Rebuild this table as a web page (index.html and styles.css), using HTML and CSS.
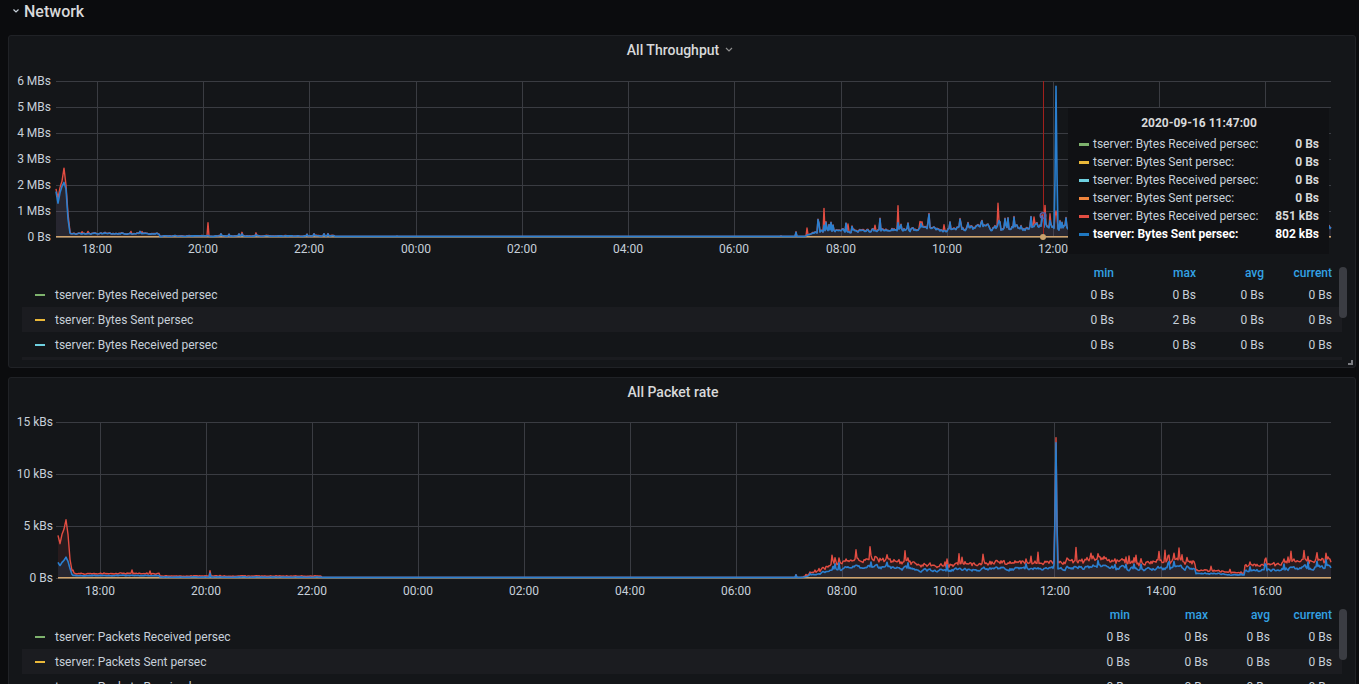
FILE: index.html
```html
<!DOCTYPE html>
<html lang="en">
<head>
<meta charset="utf-8">
<title>Network</title>
<link rel="stylesheet" href="styles.css">
</head>
<body>
<div class="dash">
  <div class="row-head">
    <svg class="row-chev" width="6" height="4" viewBox="0 0 6 4"><path d="M0.5 0.5L3 3L5.5 0.5"/></svg>
    <span>Network</span>
  </div>

  <section class="panel">
    <header class="panel-title">
      <span>All Throughput</span>
      <svg class="title-chev" width="8" height="5" viewBox="0 0 8 5"><path d="M1 1L4 4L7 1"/></svg>
    </header>
    <svg class="chart" width="1346" height="195" viewBox="9 63 1346 195">
      <g class="grid">
        <path d="M56 81.5H1331M56 107.5H1331M56 133.5H1331M56 159.5H1331M56 185.5H1331M56 211.5H1331M56 237.5H1331"/>
        <path d="M97.5 81V237M203.5 81V237M309.5 81V237M416.5 81V237M522.5 81V237M628.5 81V237M734.5 81V237M841.5 81V237M947.5 81V237M1053.5 81V237M1159.5 81V237M1265.5 81V237"/>
      </g>
      <g id="plot1"></g>
      <line class="hover-line" x1="1043.5" y1="81" x2="1043.5" y2="237"/>
      <circle class="hover-dot-b" cx="1043" cy="215.5" r="2.8"/>
      <circle class="hover-dot-z" cx="1043" cy="237" r="3"/>
      <g class="ylab">
        <text x="51" y="85">6 MBs</text>
        <text x="51" y="111">5 MBs</text>
        <text x="51" y="137">4 MBs</text>
        <text x="51" y="163">3 MBs</text>
        <text x="51" y="189">2 MBs</text>
        <text x="51" y="215">1 MBs</text>
        <text x="51" y="241">0 Bs</text>
      </g>
      <g class="xlab">
        <text x="97" y="253">18:00</text>
        <text x="203" y="253">20:00</text>
        <text x="309" y="253">22:00</text>
        <text x="416" y="253">00:00</text>
        <text x="522" y="253">02:00</text>
        <text x="628" y="253">04:00</text>
        <text x="734" y="253">06:00</text>
        <text x="841" y="253">08:00</text>
        <text x="947" y="253">10:00</text>
        <text x="1053" y="253">12:00</text>
        <text x="1159" y="253">14:00</text>
        <text x="1265" y="253">16:00</text>
      </g>
    </svg>
    <div class="legend">
      <div class="lg-row lg-head"><span></span><span class="v">min</span><span class="v">max</span><span class="v">avg</span><span class="v">current</span></div>
      <div class="lg-row"><span class="nm"><i class="dash-sw c1"></i>tserver: Bytes Received persec</span><span class="v">0 Bs</span><span class="v">0 Bs</span><span class="v">0 Bs</span><span class="v">0 Bs</span></div>
      <div class="lg-row alt"><span class="nm"><i class="dash-sw c2"></i>tserver: Bytes Sent persec</span><span class="v">0 Bs</span><span class="v">2 Bs</span><span class="v">0 Bs</span><span class="v">0 Bs</span></div>
      <div class="lg-row"><span class="nm"><i class="dash-sw c3"></i>tserver: Bytes Received persec</span><span class="v">0 Bs</span><span class="v">0 Bs</span><span class="v">0 Bs</span><span class="v">0 Bs</span></div>
      <div class="lg-more"></div>
    </div>
    <div class="scroll-thumb"></div>
    <div class="resize"></div>

    <div class="tooltip">
      <div class="tt-time">2020-09-16 11:47:00</div>
      <div class="tt-row"><i class="tt-sw c1"></i><span class="tt-name">tserver: Bytes Received persec:</span><span class="tt-val">0 Bs</span></div>
      <div class="tt-row"><i class="tt-sw c2"></i><span class="tt-name">tserver: Bytes Sent persec:</span><span class="tt-val">0 Bs</span></div>
      <div class="tt-row"><i class="tt-sw c3"></i><span class="tt-name">tserver: Bytes Received persec:</span><span class="tt-val">0 Bs</span></div>
      <div class="tt-row"><i class="tt-sw c4"></i><span class="tt-name">tserver: Bytes Sent persec:</span><span class="tt-val">0 Bs</span></div>
      <div class="tt-row"><i class="tt-sw c5"></i><span class="tt-name">tserver: Bytes Received persec:</span><span class="tt-val">851 kBs</span></div>
      <div class="tt-row tt-hl"><i class="tt-sw c6"></i><span class="tt-name">tserver: Bytes Sent persec:</span><span class="tt-val">802 kBs</span></div>
    </div>
  </section>

  <section class="panel">
    <header class="panel-title">
      <span>All Packet rate</span>
      <svg class="title-chev hidden" width="8" height="5" viewBox="0 0 8 5"><path d="M1 1L4 4L7 1"/></svg>
    </header>
    <svg class="chart" width="1346" height="195" viewBox="9 405 1346 195">
      <g class="grid">
        <path d="M56 422.5H1331M56 474.5H1331M56 526.5H1331M56 578.5H1331"/>
        <path d="M100.5 422V578M206.5 422V578M312.5 422V578M418.5 422V578M524.5 422V578M630.5 422V578M736.5 422V578M842.5 422V578M948.5 422V578M1054.5 422V578M1161.5 422V578M1267.5 422V578"/>
      </g>
      <g id="plot2"></g>
      <g class="ylab">
        <text x="53" y="426">15 kBs</text>
        <text x="53" y="478">10 kBs</text>
        <text x="53" y="530">5 kBs</text>
        <text x="53" y="582">0 Bs</text>
      </g>
      <g class="xlab">
        <text x="100" y="595">18:00</text>
        <text x="206" y="595">20:00</text>
        <text x="312" y="595">22:00</text>
        <text x="418" y="595">00:00</text>
        <text x="524" y="595">02:00</text>
        <text x="630" y="595">04:00</text>
        <text x="736" y="595">06:00</text>
        <text x="842" y="595">08:00</text>
        <text x="948" y="595">10:00</text>
        <text x="1055" y="595">12:00</text>
        <text x="1161" y="595">14:00</text>
        <text x="1267" y="595">16:00</text>
      </g>
    </svg>
    <div class="legend legend-b">
      <div class="lg-row lg-head"><span></span><span class="v">min</span><span class="v">max</span><span class="v">avg</span><span class="v">current</span></div>
      <div class="lg-row"><span class="nm"><i class="dash-sw c1"></i>tserver: Packets Received persec</span><span class="v">0 Bs</span><span class="v">0 Bs</span><span class="v">0 Bs</span><span class="v">0 Bs</span></div>
      <div class="lg-row alt"><span class="nm"><i class="dash-sw c2"></i>tserver: Packets Sent persec</span><span class="v">0 Bs</span><span class="v">0 Bs</span><span class="v">0 Bs</span><span class="v">0 Bs</span></div>
      <div class="lg-row"><span class="nm"><i class="dash-sw c3"></i>tserver: Packets Received persec</span><span class="v">0 Bs</span><span class="v">0 Bs</span><span class="v">0 Bs</span><span class="v">0 Bs</span></div>
    </div>
    <div class="scroll-thumb"></div>
  </section>
</div>
<script src="script.js"></script>
</body>
</html>
```

FILE: styles.css
```css
* { box-sizing: border-box; }
html, body { margin: 0; background: #0b0c0e; }
body {
  font-family: Roboto, "Helvetica Neue", Arial, sans-serif;
  font-size: 12px;
  color: #c7d0d9;
  height: 684px;
  overflow: hidden;
}
.dash { padding: 0 3px 0 8px; }

.row-head {
  height: 22px;
  display: flex;
  align-items: center;
  gap: 5px;
  padding-left: 5px;
  margin-bottom: 13px;
  color: #d8d9da;
  font-size: 16px;
  font-weight: 500;
}
.row-chev path { fill: none; stroke: #c7d0d9; stroke-width: 1.2; }

.panel {
  position: relative;
  height: 333px;
  margin-bottom: 9px;
  background: #141619;
  border: 1px solid #202226;
  border-radius: 3px;
  overflow: hidden;
}
.panel-title {
  height: 27px;
  display: flex;
  align-items: center;
  justify-content: center;
  gap: 6px;
  padding-right: 4px;
  font-size: 14px;
  font-weight: 500;
  color: #d8d9da;
}
.title-chev path { fill: none; stroke: #8e8e8e; stroke-width: 1.2; }
.title-chev.hidden { visibility: hidden; }

.chart { display: block; }
.grid path { fill: none; stroke: #3a3c42; stroke-width: 1; }
.ylab text { fill: #c7d0d9; font-size: 12px; text-anchor: end; }
.xlab text { fill: #c7d0d9; font-size: 12px; text-anchor: middle; }

.fill-red { fill: rgba(226, 77, 66, 0.1); stroke: none; }
.fill-blue { fill: rgba(31, 120, 193, 0.12); stroke: none; }
.zero { fill: none; stroke: #cfa36c; stroke-width: 1.6; }
.line-red { fill: none; stroke: #e24d42; stroke-width: 1.4; stroke-linejoin: round; }
.line-blue { fill: none; stroke: #2a7fcf; stroke-width: 1.6; stroke-linejoin: round; }
.hover-line { stroke: #a0201c; stroke-width: 1; }
.hover-dot-b { fill: none; stroke: #5f5fa8; stroke-width: 1.5; }
.hover-dot-z { fill: #c9a26d; }

.legend {
  height: 102px;
  overflow: hidden;
  padding: 5px 13px 0;
}
.lg-row {
  display: grid;
  grid-template-columns: 1fr 80px 82px 68px 68px;
  align-items: center;
  height: 25px;
}
.legend-b .lg-row { grid-template-columns: 1fr 80px 78px 62px 62px; }
.lg-row.alt, .lg-more { background: #1b1c20; }
.lg-more { height: 3px; }
.lg-head { height: 19px; color: #33a2e5; font-weight: 500; }
.v { text-align: right; padding-right: 10px; white-space: nowrap; }
.nm { display: flex; align-items: center; padding-left: 13px; white-space: nowrap; }
.dash-sw { display: block; width: 10px; height: 2px; margin-right: 10px; }

.c1 { background: #7eb26d; }
.c2 { background: #eab839; }
.c3 { background: #6ed0e0; }
.c4 { background: #ef843c; }
.c5 { background: #e24d42; }
.c6 { background: #1f78c1; }

.scroll-thumb {
  position: absolute;
  left: 1330px;
  top: 231px;
  width: 8px;
  height: 51px;
  border-radius: 4px;
  background: #3b3d43;
}
.resize {
  position: absolute;
  right: 2px;
  bottom: 2px;
  width: 5px;
  height: 5px;
  border-right: 2px solid #7b7d82;
  border-bottom: 2px solid #7b7d82;
}

.tooltip {
  position: absolute;
  left: 1059px;
  top: 72px;
  width: 261px;
  padding: 7px 10px 11px 11px;
  background: #101114;
  color: #c7d0d9;
}
.tt-time {
  height: 16px;
  line-height: 16px;
  text-align: center;
  font-weight: 700;
  color: #d8d9da;
  margin-bottom: 4px;
}
.tt-row {
  display: flex;
  align-items: center;
  height: 18px;
  white-space: nowrap;
}
.tt-sw { display: block; width: 10px; height: 3px; margin-right: 4px; }
.tt-name { flex: 1; }
.tt-val { font-weight: 700; color: #d8d9da; }
.tt-hl .tt-name { font-weight: 700; color: #ffffff; }
.tt-hl .tt-val { color: #ffffff; }
```

FILE: script.js
```js
(function () {
  var NS = 'http://www.w3.org/2000/svg';

  function rng(seed) {
    return function () {
      seed |= 0; seed = seed + 0x6D2B79F5 | 0;
      var t = Math.imul(seed ^ seed >>> 15, 1 | seed);
      t = t + Math.imul(t ^ t >>> 7, 61 | t) ^ t;
      return ((t ^ t >>> 14) >>> 0) / 4294967296;
    };
  }
  function interp(pts, x) {
    for (var i = 0; i < pts.length - 1; i++) {
      if (x <= pts[i + 1][0]) {
        var a = pts[i], b = pts[i + 1];
        var t = (x - a[0]) / (b[0] - a[0]);
        return a[1] + (b[1] - a[1]) * t;
      }
    }
    return pts[pts.length - 1][1];
  }
  function line(pts) {
    return 'M' + pts.map(function (p) { return p[0] + ',' + p[1].toFixed(1); }).join('L');
  }
  function area(pts, base) {
    return line(pts) + 'L' + pts[pts.length - 1][0] + ',' + base + 'L' + pts[0][0] + ',' + base + 'Z';
  }
  function add(g, d, cls) {
    var p = document.createElementNS(NS, 'path');
    p.setAttribute('d', d);
    p.setAttribute('class', cls);
    g.appendChild(p);
  }

  function build(cfg) {
    var r = rng(cfg.seed), n = 0, blue = [], red = [];
    for (var x = cfg.x0; x <= cfg.x1; x += 1) {
      n = 0.6 * n + 0.4 * (r() - 0.5) * 2;
      var v = cfg.fn(x, r, n);
      blue.push([x, Math.min(cfg.base - 0.6, cfg.base - v[0] * cfg.scale)]);
      red.push([x, Math.min(cfg.base - 0.6, cfg.base - v[1] * cfg.scale)]);
    }
    var g = document.getElementById(cfg.id);
    add(g, area(red, cfg.base), 'fill-red');
    add(g, area(blue, cfg.base), 'fill-blue');
    add(g, 'M' + cfg.x0 + ' ' + (cfg.base - 0.3) + 'H' + cfg.x1, 'zero');
    add(g, line(red), 'line-red');
    add(g, line(blue), 'line-blue');
  }

  var tb = [[56, 1.75], [58, 1.3], [60, 1.7], [62, 1.95], [64, 2.1], [66, 1.85], [68, 0.7], [70, 0.15]];
  var tr = [[56, 1.85], [58, 1.5], [60, 1.9], [62, 2.15], [64, 2.65], [66, 2.0], [68, 0.9], [70, 0.2]];
  var spikesTop = {
    208: [0.06, 0.55], 242: [0.12, 0.18], 256: [0.1, 0.16],
    796: [0.18, 0.2], 824: [0.45, 1.1], 898: [0.55, 1.2],
    998: [0.5, 1.3],
    1042: [0.8, 0.85], 1043: [0.8, 0.85],
    1055: [2.2, 0.8], 1056: [5.8, 1.0], 1057: [2.4, 0.8]
  };
  function topFn(x, r, n) {
    var b, d;
    if (x <= 70) { b = interp(tb, x); d = interp(tr, x) - b; }
    else if (x < 160) { b = 0.13 + 0.05 * n + (r() < 0.06 ? 0.1 * r() : 0); d = 0.015 * r() + (r() < 0.05 ? 0.08 : 0); }
    else if (x < 335) { b = 0.04 + 0.025 * n + (r() < 0.03 ? 0.07 : 0); d = 0.015 * r(); }
    else if (x < 790) { b = 0.006 * r() + (r() < 0.01 ? 0.03 : 0); d = 0.004 * r(); }
    else if (x < 806) { b = 0.015 * r(); d = 0.01 * r(); }
    else {
      var t = Math.min(0.48, 0.24 + 0.24 * (x - 806) / 260) * Math.min(1, (x - 804) / 10);
      b = t * (0.85 + 0.5 * n) + (r() < 0.09 ? 0.12 + 0.35 * r() : 0);
      d = 0.03 * r() + (r() < 0.035 ? 0.15 + 0.35 * r() : 0);
    }
    var s = spikesTop[x];
    if (s) { b = s[0]; d = s[1] - s[0]; }
    return [Math.max(0, b), Math.max(0, b + d)];
  }

  var bb = [[58, 1.5], [60, 1.2], [62, 1.5], [64, 1.7], [66, 2.0], [68, 1.6], [70, 0.9], [72, 0.35]];
  var br = [[58, 4.1], [60, 3.3], [62, 4.2], [64, 4.7], [66, 5.6], [68, 4.2], [70, 1.8], [72, 0.7]];
  var spikesBot = {
    210: [0.45, 0.7], 796: [0.3, 0.32], 1055: [6, 6.5], 1056: [13.0, 13.5], 1057: [5, 5.5]
  };
  function botFn(x, r, n) {
    var b, d;
    if (x <= 72) { b = interp(bb, x); d = interp(br, x) - b; }
    else if (x < 160) { b = 0.24 + 0.06 * n; d = 0.14 + 0.1 * r() + (r() < 0.06 ? 0.3 : 0); }
    else if (x < 322) { b = 0.09 + 0.04 * n; d = 0.07 + 0.06 * r(); }
    else if (x < 790) { b = 0.015 * r(); d = 0.005 * r(); }
    else if (x < 800) { b = 0.04 * r(); d = 0.02 * r(); }
    else {
      var ramp = Math.min(1, (x - 800) / 40);
      var L = ramp * (1 + 0.12 * Math.sin(x / 41) + 0.1 * Math.sin(x / 17)
        - (x > 1195 && x < 1245 ? 0.5 : 0) + (x > 1150 && x < 1190 ? 0.15 : 0));
      b = L * (0.9 + 0.35 * n) + (r() < 0.05 ? L * (0.3 + 0.3 * r()) : 0);
      d = L * (0.45 + 0.3 * r()) + (r() < 0.06 ? L * (0.4 + 0.7 * r()) : 0);
    }
    var s = spikesBot[x];
    if (s) { b = s[0]; d = s[1] - s[0]; }
    return [Math.max(0, b), Math.max(0, b + d)];
  }

  build({ id: 'plot1', seed: 11, x0: 56, x1: 1331, base: 237, scale: 26, fn: topFn });
  build({ id: 'plot2', seed: 29, x0: 58, x1: 1331, base: 578, scale: 10.4, fn: botFn });
})();
```
